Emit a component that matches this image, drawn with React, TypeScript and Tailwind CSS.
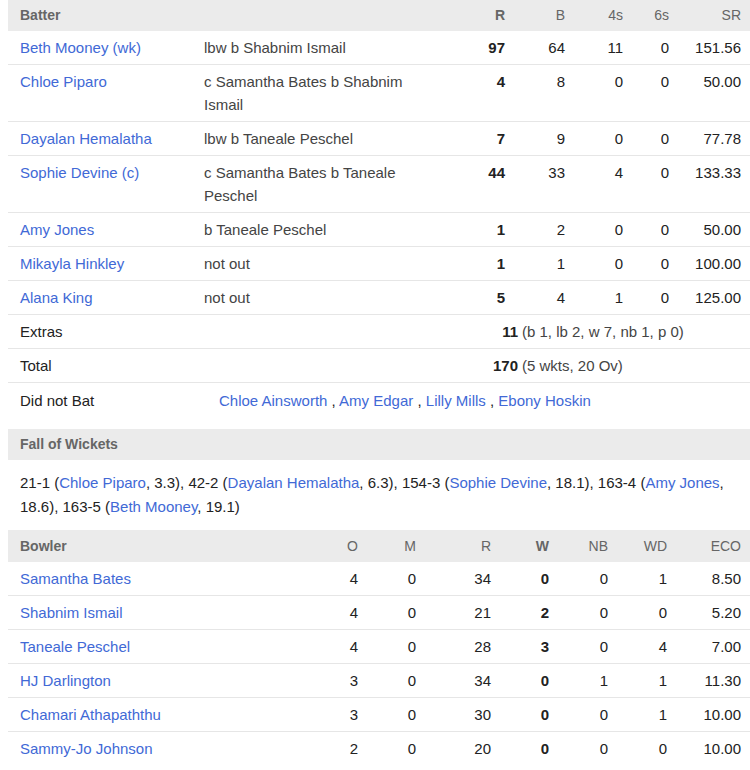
import React from "react";

const batters = [
  { name: "Beth Mooney (wk)", out: "lbw b Shabnim Ismail", r: 97, b: 64, f: 11, s: 0, sr: "151.56" },
  { name: "Chloe Piparo", out: "c Samantha Bates b Shabnim Ismail", r: 4, b: 8, f: 0, s: 0, sr: "50.00" },
  { name: "Dayalan Hemalatha", out: "lbw b Taneale Peschel", r: 7, b: 9, f: 0, s: 0, sr: "77.78" },
  { name: "Sophie Devine (c)", out: "c Samantha Bates b Taneale Peschel", r: 44, b: 33, f: 4, s: 0, sr: "133.33" },
  { name: "Amy Jones", out: "b Taneale Peschel", r: 1, b: 2, f: 0, s: 0, sr: "50.00" },
  { name: "Mikayla Hinkley", out: "not out", r: 1, b: 1, f: 0, s: 0, sr: "100.00" },
  { name: "Alana King", out: "not out", r: 5, b: 4, f: 1, s: 0, sr: "125.00" },
];

const bowlers = [
  { name: "Samantha Bates", o: 4, m: 0, r: 34, w: 0, nb: 0, wd: 1, eco: "8.50" },
  { name: "Shabnim Ismail", o: 4, m: 0, r: 21, w: 2, nb: 0, wd: 0, eco: "5.20" },
  { name: "Taneale Peschel", o: 4, m: 0, r: 28, w: 3, nb: 0, wd: 4, eco: "7.00" },
  { name: "HJ Darlington", o: 3, m: 0, r: 34, w: 0, nb: 1, wd: 1, eco: "11.30" },
  { name: "Chamari Athapaththu", o: 3, m: 0, r: 30, w: 0, nb: 0, wd: 1, eco: "10.00" },
  { name: "Sammy-Jo Johnson", o: 2, m: 0, r: 20, w: 0, nb: 0, wd: 0, eco: "10.00" },
];

const batGrid = "grid grid-cols-[184px_230px_71px_60px_58px_46px_72px]";
const bowlGrid = "grid grid-cols-[298px_40px_58px_75px_58px_59px_59px_74px]";

const Link = ({ children }: { children: React.ReactNode }) => (
  <a className="text-[#4169d6]">{children}</a>
);

const App = () => {
  return (
    <div className="pl-2 bg-white text-[15px] leading-[23px] text-[#222]" style={{ fontFamily: '"Liberation Sans", Arial, sans-serif' }}>
      {/* batting */}
      <div className={`${batGrid} bg-[#ebebeb] text-[14px] text-[#666] pl-3 pr-[9px] h-[31px] items-center`}>
        <div className="font-bold">Batter</div>
        <div></div>
        <div className="text-right font-bold">R</div>
        <div className="text-right">B</div>
        <div className="text-right">4s</div>
        <div className="text-right">6s</div>
        <div className="text-right">SR</div>
      </div>
      {batters.map((p) => (
        <div key={p.name} className={`${batGrid} pl-3 pr-[9px] py-[5px] border-b border-[#e6e6e6]`}>
          <div>
            <Link>{p.name}</Link>
          </div>
          <div className="text-[#444]">{p.out}</div>
          <div className="text-right font-bold">{p.r}</div>
          <div className="text-right">{p.b}</div>
          <div className="text-right">{p.f}</div>
          <div className="text-right">{p.s}</div>
          <div className="text-right">{p.sr}</div>
        </div>
      ))}
      <div className="flex pl-3 py-[5px] border-b border-[#e6e6e6]">
        <div className="w-[498px] flex justify-between">
          <span>Extras</span>
          <span className="font-bold">11</span>
        </div>
        <span className="ml-[4px] text-[#444]">(b 1, lb 2, w 7, nb 1, p 0)</span>
      </div>
      <div className="flex pl-3 py-[5px] border-b border-[#e6e6e6]">
        <div className="w-[498px] flex justify-between">
          <span>Total</span>
          <span className="font-bold">170</span>
        </div>
        <span className="ml-[4px] text-[#444]">(5 wkts, 20 Ov)</span>
      </div>
      <div className="flex pl-3 pt-[6px] pb-[7px]">
        <div className="w-[199px]">Did not Bat</div>
        <div>
          <Link>Chloe Ainsworth</Link> , <Link>Amy Edgar</Link> , <Link>Lilly Mills</Link> ,{" "}
          <Link>Ebony Hoskin</Link>
        </div>
      </div>

      {/* fall of wickets */}
      <div className="mt-[10px] bg-[#ebebeb] text-[14px] text-[#666] font-bold pl-3 h-[31px] flex items-center">
        Fall of Wickets
      </div>
      <div className="pl-3 pr-1 pt-[11px] pb-[11px] leading-[24px]">
        <div>
          <span>21-1 (</span><Link>Chloe Piparo</Link><span>, 3.3), 42-2 (</span>
          <Link>Dayalan Hemalatha</Link><span>, 6.3), 154-3 (</span><Link>Sophie Devine</Link>
          <span>, 18.1), 163-4 (</span><Link>Amy Jones</Link><span>,</span>
        </div>
        <div>
          <span>18.6), 163-5 (</span><Link>Beth Mooney</Link><span>, 19.1)</span>
        </div>
      </div>

      {/* bowling */}
      <div className={`${bowlGrid} bg-[#ebebeb] text-[14px] text-[#666] pl-3 pr-[9px] h-[32px] items-center`}>
        <div className="font-bold">Bowler</div>
        <div className="text-right">O</div>
        <div className="text-right">M</div>
        <div className="text-right">R</div>
        <div className="text-right font-bold">W</div>
        <div className="text-right">NB</div>
        <div className="text-right">WD</div>
        <div className="text-right">ECO</div>
      </div>
      {bowlers.map((p) => (
        <div key={p.name} className={`${bowlGrid} pl-3 pr-[9px] py-[5px] border-b border-[#e6e6e6] last:border-b-0`}>
          <div>
            <Link>{p.name}</Link>
          </div>
          <div className="text-right">{p.o}</div>
          <div className="text-right">{p.m}</div>
          <div className="text-right">{p.r}</div>
          <div className="text-right font-bold">{p.w}</div>
          <div className="text-right">{p.nb}</div>
          <div className="text-right">{p.wd}</div>
          <div className="text-right">{p.eco}</div>
        </div>
      ))}
    </div>
  );
};

export default App;
